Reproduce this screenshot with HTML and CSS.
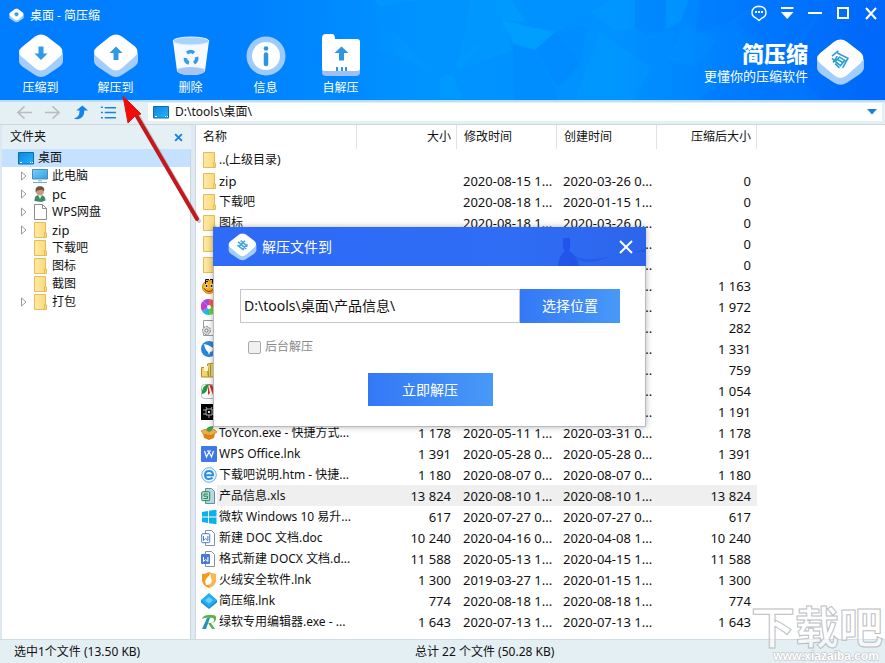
FILE: index.html
```html
<!DOCTYPE html>
<html lang="zh-CN">
<head>
<meta charset="utf-8">
<title>桌面 - 简压缩</title>
<link rel="stylesheet" href="styles.css">
</head>
<body>
<svg class="defs" aria-hidden="true">
  <defs>
    <linearGradient id="gf" x1="0" x2="1"><stop offset="0" stop-color="#ffe9a6"/><stop offset="1" stop-color="#f9d978"/></linearGradient>
    <linearGradient id="gs" x1="0" y1="0" x2="1" y2="1"><stop offset="0" stop-color="#0d86dd"/><stop offset="1" stop-color="#27b4fb"/></linearGradient>
    <linearGradient id="gm" x1="0" y1="0" x2="1" y2="1"><stop offset="0" stop-color="#7fd0f8"/><stop offset="1" stop-color="#2c9fe6"/></linearGradient>
    <symbol id="folder" viewBox="0 0 16 16"><path d="M2.500 .5h11v10.500h1v4.500h-12z" fill="url(#gf)" stroke="#e3bd58"/><path d="M12.500 15v-4.500h1.500" fill="none" stroke="#e3bd58"/></symbol>
    <symbol id="desktop" viewBox="0 0 16 16"><path d="M.5 2.500h15v11.500H.5z" fill="url(#gs)" stroke="#0b6cb5"/><path d="M2 12.500h2M12 12.500h1M14 12.500h1" stroke="#fff"/></symbol>
    <symbol id="monitor" viewBox="0 0 16 16"><path d="M.5 1.500h15v9.500H.5z" fill="url(#gm)" stroke="#4d8db5"/><path d="M6 11.500h4v2H6z" fill="#a9c8dc"/><path d="M1 14.500h14" stroke="#76a9cb"/></symbol>
    <symbol id="user" viewBox="0 0 16 16"><path d="M2.500 15c0-4 1-6 5-6s6 2 6 5.500l-4 1.500z" fill="#3c8a68"/><path d="M6 9l2 4 2-4z" fill="#dfeee4"/><circle cx="8" cy="5.500" r="3.800" fill="#c8997b"/><path d="M4 7C2.500 2 5 0 8 .3c3-.3 5 2 4 5l-2-1.500-5 .7z" fill="#6b5243"/></symbol>
    <symbol id="page" viewBox="0 0 16 16"><path d="M2.500.5h8l4 4v11h-12z" fill="#fff" stroke="#8c8c8c"/><path d="M10.500.5v4h4" fill="none" stroke="#8c8c8c"/></symbol>
    <symbol id="tile" viewBox="0 0 46 44"><path d="M1 19v8q0 3 4 6l12 8q6 4 12 0l12-8q4-3 4-6v-8z" fill="#a2cdfc"/><path d="M17 2.500q6-4 12 0l13 10q5 5 0 10L29 34q-6 5-12 0L4 23q-6-5 0-10z" fill="#fff"/></symbol>
    <symbol id="smile" viewBox="0 0 16 16"><circle cx="8" cy="9" r="6.500" fill="#f9b51c" stroke="#d87a18"/><path d="M4.500 6V1.500H8M4.500 3.500H7M9 1.500h5M11.500 2v3.500" fill="none" stroke="#111"/><path d="M3 10.500q5 6 10 0" fill="none" stroke="#862b11"/><circle cx="5.500" cy="8" r="1.700" fill="#fff"/><circle cx="10.500" cy="8" r="1.700" fill="#fff"/><circle cx="5.500" cy="8" r="1"/><circle cx="10.500" cy="8" r="1"/></symbol>
    <symbol id="wheel" viewBox="0 0 16 16"><path d="M8 8L2 2a8 8 0 0 1 6-2z" fill="#9f4fe0"/><path d="M8 8V0a8 8 0 0 1 8 8z" fill="#ff5a43"/><path d="M8 8h8a8 8 0 0 1-8 8z" fill="#6bd334"/><path d="M8 8v8a8 8 0 0 1-7-4z" fill="#1fb7ef"/><path d="M8 8l-7 4A8 8 0 0 1 2 2z" fill="#c93bd8"/><circle cx="8" cy="8" r="2" fill="#fff"/></symbol>
    <symbol id="gearfile" viewBox="0 0 16 16"><path d="M2.500.5h9l3 3v12h-12z" fill="#fff" stroke="#999"/><circle cx="5.500" cy="10.500" r="4" fill="#ddd" stroke="#777" stroke-dasharray="2 1"/><circle cx="5.500" cy="10.500" r="1.500" fill="#fff" stroke="#777"/></symbol>
    <symbol id="bird" viewBox="0 0 16 16"><circle cx="8" cy="8" r="8" fill="#2a86d4"/><path d="M3 3q6 1 10 5l-2 1 1 1-3 1-1 3-1-3q-3-2-4-8z" fill="#fff"/></symbol>
    <symbol id="books" viewBox="0 0 16 16"><path d="M.5 5.500h6l1 9.500h-7zM6.500 2l7-1 1 14h-7z" fill="#f4d36d" stroke="#b98b22"/><path d="M3 4h4v5H3z" fill="#fff7d2"/><path d="M9.500 2.500v12" stroke="#7fa83b"/></symbol>
    <symbol id="leaf" viewBox="0 0 16 16"><rect x=".5" y="1.500" width="15" height="14" rx="3" fill="#fff" stroke="#bbb"/><path d="M1 8q1-6 7-7l-2 6q-1 3-5 4z" fill="#26963a"/><path d="M8 1q6 2 7 9l-3 2z" fill="#d92c22"/><path d="M7 2l2 8-2 2z" fill="#d92c22"/></symbol>
    <symbol id="bug" viewBox="0 0 16 16"><path d="M0 0h16v16H0z"/><path d="M5 5h6v6H5zM2 6h3M2 10h3M11 6h3M11 10h3M6 5L5 3M10 5l1-2M8 11v3" fill="none" stroke="#aaa"/><path d="M7 7h2v2H7z" fill="#ddd"/></symbol>
    <symbol id="box" viewBox="0 0 16 16"><path d="M2 8l6 2 6-2-1 5-5 2-5-2z" fill="#db8318"/><path d="M0 6l4-2 4 3 5-3 3 3-6 4-3-2-4 1z" fill="#f1ad3d" stroke="#a9610f" stroke-width=".5"/><path d="M5 5q1-4 8-4-1 4-5 6z" fill="#3fa044"/></symbol>
    <symbol id="wps" viewBox="0 0 16 16"><rect width="16" height="16" rx="1" fill="#3f78e8"/><path d="M3.500 5l2 6L8 6l2.500 5 2-6M6 5h4" fill="none" stroke="#fff" stroke-width="1.200"/></symbol>
    <symbol id="ie" viewBox="0 0 16 16"><circle cx="8" cy="8" r="7.300" fill="#eaf5fd" stroke="#6cb2e8"/><path d="M4 8.300h8Q12 4 8 4 4 4 4 8.300q.5 3.700 4 3.700 2 0 3.500-1.500" fill="none" stroke="#2b8fdb" stroke-width="2"/></symbol>
    <symbol id="xls" viewBox="0 0 16 16"><path d="M4.500.5h6l3 3v12h-9z" fill="#b9d7e4" stroke="#648f9c"/><rect x=".7" y="3.700" width="8" height="9" rx="1" fill="#b7e0cd" stroke="#23875d"/><path d="M7 6H3v2.200h3.500v2.300H2.500" fill="none" stroke="#23875d"/></symbol>
    <symbol id="win" viewBox="0 0 16 16"><path d="M1 3l6-1v5.500H1zM8 1.800L15.500.8v6.700H8zM1 8.500h6V14l-6-1zM8 8.500h7.500v6.700L8 14.200z" fill="#09b2ec"/></symbol>
    <symbol id="doc" viewBox="0 0 16 16"><path d="M4.500.5h6l3 3v12h-9z" fill="#fff" stroke="#7c8fae"/><rect x=".7" y="3.700" width="8" height="9" rx="1" fill="#fff" stroke="#4a7ac9"/><path d="M2.500 6v4.500l2.200-2 2.200 2V6" fill="none" stroke="#4a7ac9"/></symbol>
    <symbol id="docx" viewBox="0 0 16 16"><path d="M4.500.5h6l3 3v12h-9z" fill="#fff" stroke="#7c8fae"/><rect y="3" width="9" height="10" rx="1" fill="#4a7bd4"/><path d="M2.500 6v4.500l2.200-2 2.200 2V6" fill="none" stroke="#fff"/></symbol>
    <symbol id="fire" viewBox="0 0 16 16"><path d="M1 2q4 0 7-2 3 2 7 2v6q0 5-7 8-7-3-7-8z" fill="#f39b21"/><path d="M8 0q3 2 7 2v6q0 5-7 8z" fill="#f9b84e"/><path d="M5 13Q2 8 10 2q-1 4 1 6 0 5-6 5z" fill="#fff"/></symbol>
    <symbol id="gem" viewBox="0 0 16 16"><path d="M0 7v2.500L8 16l8-6.500V7z" fill="#1990d8"/><path d="M8 0l8 7-8 7-8-7z" fill="#27aeef"/><path d="M8 4l4 3.200L8 10.500 4 7.200z" fill="#66d1f9"/></symbol>
    <symbol id="redit" viewBox="0 0 16 16"><path d="M1 5Q2 1 8 1h3q5 0 4 4t-5 4l4 6h-3L7 9h2q4 0 4-3T9 4Q4 3 1 5z" fill="#57b34b"/><path d="M6 4h3L5 15H1z" fill="#2496b4"/></symbol>
    <symbol id="tri" viewBox="0 0 8 10"><path d="M1.500 1v8L6 5z" fill="#fff" stroke="#999"/></symbol>
    <symbol id="cross" viewBox="0 0 16 16"><path d="M2 2l12 12M14 2L2 14" fill="none" stroke="currentColor" stroke-width="2"/></symbol>
  </defs>
</svg>

<div class="app">
  <header class="top">
    <svg class="facets" viewBox="0 0 885 100" preserveAspectRatio="none" aria-hidden="true">
      <g fill="#00b4ff">
        <path d="M470 0h30l5 22-48 48z" opacity=".14"/><path d="M503 21l52 11-20 18-22-7z" opacity=".35"/><path d="M505 22l8 28-55 21-4-8z" opacity=".12"/>
        <path d="M590 12L610 0h25v28l-20 3z" opacity=".12"/><path d="M374 0h46l-40 7z" opacity=".16"/><path d="M380 15l50 55-50-20z" opacity=".1"/><path d="M440 78l12-4 10 24h-22z" opacity=".2"/><path d="M600 32l50 35-15 33h-60z" opacity=".12"/><path d="M665 0h24l-9 22-15 8z" opacity=".25"/><path d="M668 60l18-38 30 18-20 28z" opacity=".1"/><path d="M500 0h12l14 22-23-2z" opacity=".22"/>
      </g>
      <g fill="#0064f8">
        <path d="M513 46l22 4 22 42v8h-43z" opacity=".1"/><path d="M535 50l20-18 25 33-22 23z" opacity=".16"/><path d="M555 32l24 33 8-36-14-5z" opacity=".07"/>
        <path d="M635 28V0h32v30l-20 5z" opacity=".1"/><path d="M700 0h65l-35 22-35 12z" opacity=".16"/><path d="M765 0h60l-40 60-50-38z" opacity=".14"/><path d="M830 0h55v100h-65l-30-40z" opacity=".2"/><path d="M700 100l45-42 40 42z" opacity=".14"/><path d="M310 52l30-18 30 66h-32z" opacity=".06"/>
      </g>
    </svg>
    <div class="titlebar">
      <div class="title"><svg class="i15" viewBox="0 0 46 44"><use href="#tile"/><path d="M17 18h12M23 12v12" stroke="#38a0e8" stroke-width="7"/></svg><span>桌面 - 简压缩</span></div>
      <div class="controls">
        <button aria-label="反馈"><svg viewBox="0 0 18 18"><path d="M9 16.500L6 14Q2 12.500 2 8.500 2.300 2.500 9 2.200q6.700.3 7 6.300 0 4-4 5.500z" fill="none" stroke="currentColor" stroke-width="1.400"/><path d="M5 8h2M8 8h2M11 8h2" stroke="currentColor" stroke-width="2"/></svg></button>
        <button aria-label="菜单"><svg viewBox="0 0 18 18"><path d="M3 4h12.500" stroke="currentColor" stroke-width="2"/><path d="M3 8h12.500L9.200 15z" fill="currentColor"/></svg></button>
        <button aria-label="最小化"><svg viewBox="0 0 18 18"><path d="M2 9h14" stroke="currentColor" stroke-width="2"/></svg></button>
        <button aria-label="最大化"><svg viewBox="0 0 18 18"><path d="M4 4h10v10H4z" fill="none" stroke="currentColor" stroke-width="2"/></svg></button>
        <button aria-label="关闭"><svg viewBox="0 0 18 18"><path d="M4 4l10 11M14 4L4 15" stroke="currentColor" stroke-width="2"/></svg></button>
      </div>
    </div>
    <div class="ribbon">
      <nav class="tools">
        <button><svg viewBox="0 0 46 44"><use href="#tile"/><path d="M20.500 12.500h5v7h4L23 26l-6.500-6.500h4z" fill="#2f9be6"/></svg><span>压缩到</span></button>
        <button><svg viewBox="0 0 46 44"><use href="#tile"/><path d="M20.500 26v-7h-4L23 12.500l6.500 6.500h-4v7z" fill="#2f9be6"/></svg><span>解压到</span></button>
        <button><svg viewBox="0 0 46 44"><path d="M5 7l4 30q2 4 14 4t14-4l4-30z" fill="#f4faff"/><ellipse cx="23" cy="7" rx="18" ry="4" fill="#a9d3fb" stroke="#e3f2ff"/><path d="M9.500 35q13-4 27 0l-.5 3q-3 3-13 3t-13-3z" fill="#a8c4f4"/><path d="M19 19q4-3 7 0M28.500 23q1 4-2.500 6M21 29q-4-1-3.500-5" fill="none" stroke="#359be8" stroke-width="3.500"/></svg><span>删除</span></button>
        <button><svg viewBox="0 0 46 44"><circle cx="23" cy="22" r="19.500" fill="#9dcbfb"/><circle cx="23" cy="22" r="14" fill="#fff"/><circle cx="23" cy="14.500" r="2.300" fill="#2f95df"/><path d="M23 20.500v9.500" stroke="#2f95df" stroke-width="4.500" stroke-linecap="round"/></svg><span>信息</span></button>
        <button><svg viewBox="0 0 46 44"><path d="M4 30h38v8q0 4-4 4H8q-4 0-4-4z" fill="#9fbff6"/><path d="M4 4q0-4 4-4h6q3 0 3 5h22q3 0 3 3v26q0 3-3 3H7q-3 0-3-3z" fill="#fff"/><path d="M21 26.500V19h-4.500l7-6.500 7 6.500H26v7.500zM18 33h2v4h-2zM23 33h2v4h-2zM27 33h2v4h-2z" fill="#2f95df"/></svg><span>自解压</span></button>
      </nav>
      <div class="brand">
        <div class="brandtext"><strong>简压缩</strong><span>更懂你的压缩软件</span></div>
        <svg viewBox="0 0 46 44"><use href="#tile"/><g fill="none" stroke="#2c9ed6" stroke-width="1.500"><path d="M15 16l6-5M17 20l-2-2M18 23l4 4M20 13l10 5-5 9M20 16l-4 6M22 17l5 3-4 5-5-4zM20 19l5 3"/></g></svg>
      </div>
    </div>
  </header>

  <div class="nav">
    <div class="navbtns">
      <button aria-label="后退" class="off"><svg viewBox="0 0 18 18"><path d="M17 9H2M9 2.500L2 9l7 6.500" fill="none" stroke="currentColor" stroke-width="1.700"/></svg></button>
      <button aria-label="前进" class="off"><svg viewBox="0 0 18 18"><path d="M1 9h15M9 2.500L16 9l-7 6.500" fill="none" stroke="currentColor" stroke-width="1.700"/></svg></button>
      <button aria-label="向上"><svg viewBox="0 0 18 18"><path d="M2 15q6 0 6-8H4.500L11 1.500 17 7h-4q0 8-6 9-3 .5-5-1z" fill="currentColor"/></svg></button>
      <button aria-label="列表"><svg viewBox="0 0 18 18"><path d="M1 3.500h2M5 4h12M1 9h2M5 9h12M1 14.500h2M5 14.500h12" stroke="currentColor" stroke-width="1.700"/></svg></button>
    </div>
    <div class="address"><svg class="i16"><use href="#desktop"/></svg><input aria-label="地址" value="D:\tools\桌面\"><button aria-label="展开"><svg viewBox="0 0 10 6"><path d="M0 0h10L5 5.500z" fill="currentColor"/></svg></button></div>
  </div>

  <main class="panes">
    <aside class="side">
      <div class="sidehead"><h2>文件夹</h2><button aria-label="关闭文件夹"><svg viewBox="0 0 16 16"><path d="M2 2l12 12M14 2L2 14" stroke="currentColor" stroke-width="3.500"/></svg></button></div>
      <ul class="tree">
        <li class="root"><svg class="i16"><use href="#desktop"/></svg><span>桌面</span></li>
        <li><svg class="tw"><use href="#tri"/></svg><svg class="i16"><use href="#monitor"/></svg><span>此电脑</span></li>
        <li><svg class="tw"><use href="#tri"/></svg><svg class="i16"><use href="#user"/></svg><span class="latin">pc</span></li>
        <li><svg class="tw"><use href="#tri"/></svg><svg class="i16"><use href="#page"/></svg><span>WPS网盘</span></li>
        <li><svg class="tw"><use href="#tri"/></svg><svg class="i16"><use href="#folder"/></svg><span class="latin">zip</span></li>
        <li><i class="tw"></i><svg class="i16"><use href="#folder"/></svg><span>下载吧</span></li>
        <li><i class="tw"></i><svg class="i16"><use href="#folder"/></svg><span>图标</span></li>
        <li><i class="tw"></i><svg class="i16"><use href="#folder"/></svg><span>截图</span></li>
        <li><svg class="tw"><use href="#tri"/></svg><svg class="i16"><use href="#folder"/></svg><span>打包</span></li>
      </ul>
    </aside>
    <section class="list">
      <table>
        <colgroup><col class="cname"><col class="c"><col class="c"><col class="c"><col class="c"></colgroup>
        <thead><tr><th>名称</th><th class="r">大小</th><th>修改时间</th><th>创建时间</th><th class="r">压缩后大小</th></tr></thead>
        <tbody>
          <tr><td><div><svg class="i16"><use href="#folder"/></svg>..(上级目录)</div></td><td></td><td></td><td></td><td></td></tr>
          <tr><td><div><svg class="i16"><use href="#folder"/></svg><span class="latin">zip</span></div></td><td></td><td>2020-08-15 1...</td><td>2020-03-26 0...</td><td>0</td></tr>
          <tr><td><div><svg class="i16"><use href="#folder"/></svg>下载吧</div></td><td></td><td>2020-08-18 1...</td><td>2020-01-15 1...</td><td>0</td></tr>
          <tr><td><div><svg class="i16"><use href="#folder"/></svg>图标</div></td><td></td><td>2020-08-18 1...</td><td>2020-03-26 0...</td><td>0</td></tr>
          <tr><td><div><svg class="i16"><use href="#folder"/></svg></div></td><td></td><td></td><td>2020-03-26 0...</td><td>0</td></tr>
          <tr><td><div><svg class="i16"><use href="#folder"/></svg></div></td><td></td><td></td><td>2020-03-26 0...</td><td>0</td></tr>
          <tr><td><div><svg class="i16"><use href="#smile"/></svg></div></td><td></td><td></td><td>2020-03-26 0...</td><td>1 163</td></tr>
          <tr><td><div><svg class="i16"><use href="#wheel"/></svg></div></td><td></td><td></td><td>2020-03-26 0...</td><td>1 972</td></tr>
          <tr><td><div><svg class="i16"><use href="#gearfile"/></svg></div></td><td></td><td></td><td>2020-03-26 0...</td><td>282</td></tr>
          <tr><td><div><svg class="i16"><use href="#bird"/></svg></div></td><td></td><td></td><td>2020-03-26 0...</td><td>1 331</td></tr>
          <tr><td><div><svg class="i16"><use href="#books"/></svg></div></td><td></td><td></td><td>2020-03-26 0...</td><td>759</td></tr>
          <tr><td><div><svg class="i16"><use href="#leaf"/></svg></div></td><td></td><td></td><td>2020-03-26 0...</td><td>1 054</td></tr>
          <tr><td><div><svg class="i16"><use href="#bug"/></svg></div></td><td></td><td></td><td>2020-03-26 0...</td><td>1 191</td></tr>
          <tr><td><div><svg class="i16"><use href="#box"/></svg>ToYcon.exe - 快捷方式...</div></td><td>1 178</td><td>2020-05-11 1...</td><td>2020-03-31 0...</td><td>1 178</td></tr>
          <tr><td><div><svg class="i16"><use href="#wps"/></svg>WPS Office.lnk</div></td><td>1 391</td><td>2020-05-28 0...</td><td>2020-05-28 0...</td><td>1 391</td></tr>
          <tr><td><div><svg class="i16"><use href="#ie"/></svg>下载吧说明.htm - 快捷...</div></td><td>1 180</td><td>2020-08-07 0...</td><td>2020-08-07 0...</td><td>1 180</td></tr>
          <tr class="sel"><td><div><svg class="i16"><use href="#xls"/></svg>产品信息.xls</div></td><td>13 824</td><td>2020-08-10 1...</td><td>2020-08-10 1...</td><td>13 824</td></tr>
          <tr><td><div><svg class="i16"><use href="#win"/></svg>微软 Windows 10 易升...</div></td><td>617</td><td>2020-07-27 0...</td><td>2020-07-27 0...</td><td>617</td></tr>
          <tr><td><div><svg class="i16"><use href="#doc"/></svg>新建 DOC 文档.doc</div></td><td>10 240</td><td>2020-04-16 0...</td><td>2020-04-08 1...</td><td>10 240</td></tr>
          <tr><td><div><svg class="i16"><use href="#docx"/></svg>格式新建 DOCX 文档.d...</div></td><td>11 588</td><td>2020-05-13 1...</td><td>2020-04-15 1...</td><td>11 588</td></tr>
          <tr><td><div><svg class="i16"><use href="#fire"/></svg>火绒安全软件.lnk</div></td><td>1 300</td><td>2019-03-27 1...</td><td>2020-01-15 1...</td><td>1 300</td></tr>
          <tr><td><div><svg class="i16"><use href="#gem"/></svg>简压缩.lnk</div></td><td>774</td><td>2020-08-18 1...</td><td>2020-08-18 1...</td><td>774</td></tr>
          <tr><td><div><svg class="i16"><use href="#redit"/></svg>绿软专用编辑器.exe - ...</div></td><td>1 643</td><td>2020-07-13 1...</td><td>2020-07-13 1...</td><td>1 643</td></tr>
        </tbody>
      </table>
    </section>
  </main>

  <footer class="status"><span>选中1个文件 (13.50 KB)</span><span>总计 22 个文件 (50.28 KB)</span></footer>

  <form class="dialog" role="dialog" aria-labelledby="dlgtitle">
    <div class="dlghead">
      <svg class="figure" viewBox="0 0 110 39" aria-hidden="true"><path d="M27 11h7v10l-1 3q8 4 10 15H22q1-11 7-15l-2-3z" fill="#204fe8" opacity=".8"/><path d="M34 27q14 8 34 4t42-9v3q-22-1-42 7t-34-5z" fill="#2559e4" opacity=".7"/></svg>
      <svg class="dlgicon" viewBox="0 0 46 44"><use href="#tile"/><path d="M16 14l13 11M20 12l11 9M15 19l10 8M27 12l-9 9M31 18l-8 7" stroke="#42a7db" stroke-width="2.500"/></svg>
      <h1 id="dlgtitle">解压文件到</h1>
      <button type="button" aria-label="关闭对话框"><svg viewBox="0 0 16 16"><use href="#cross"/></svg></button>
    </div>
    <div class="dlgbody">
      <div class="path"><input aria-label="解压路径" value="D:\tools\桌面\产品信息\"><button type="button">选择位置</button></div>
      <label class="check"><input type="checkbox">后台解压</label>
      <button type="button" class="go">立即解压</button>
    </div>
  </form>

  <svg class="arrow" viewBox="0 0 90 140" aria-hidden="true"><path d="M84 126L23 21" stroke="#8d8d8d" stroke-width="4" stroke-linecap="round" opacity=".45"/><path d="M82 124L20 18" stroke="#c4191c" stroke-width="4" stroke-linecap="round"/><path d="M8 1l18 18-6 2-7 7z" fill="#f00d08" stroke="#d8171a"/></svg>
  <div class="mark"><b>下载吧</b><span>www.xiazaiba.com</span></div>
</div>
</body>
</html>
```
FILE: styles.css
```css
* { box-sizing: border-box; }
body { margin: 0; font: 12px/18px "Noto Sans", "Noto Sans CJK SC", sans-serif; color: #111; }
button { border: 0; padding: 0; background: none; font: inherit; color: inherit; display: flex; align-items: center; justify-content: center; }
input { font: inherit; color: inherit; border: 0; padding: 0; min-width: 0; }
h1, h2 { margin: 0; font: inherit; }
svg { flex: none; }
.defs { position: absolute; width: 0; height: 0; }
.i16 { width: 16px; height: 16px; }
.i15 { width: 15px; height: 15px; }
.latin { font-size: 13px; }
.app { position: relative; min-height: 100vh; display: flex; flex-direction: column; overflow: hidden; }

.top { position: relative; height: 100px; color: #fff; background: linear-gradient(90deg, #007cff 0, #0081ff 28%, #0094ff 48%, #0092ff 70%, #007bff 86%, #0068fa 100%); }
.facets { position: absolute; inset: 0; width: 100%; height: 100%; }
.titlebar, .ribbon { position: relative; display: flex; justify-content: space-between; }
.titlebar { height: 31px; }
.title { display: flex; align-items: center; gap: 6px; padding-left: 9px; }
.controls { display: flex; height: 26px; }
.controls button { width: 28px; }
.controls svg { width: 18px; height: 18px; }
.tools { display: flex; padding: 3px 0 0 3px; }
.tools button { width: 75px; flex-direction: column; gap: 1px; }
.tools svg { width: 46px; height: 44px; }
.brand { display: flex; align-items: flex-start; gap: 8px; padding: 8px 20px 0 0; }
.brand > svg { width: 49px; height: 47px; }
.brandtext { display: flex; flex-direction: column; align-items: flex-end; font-size: 13px; }
.brandtext strong { font-size: 22px; line-height: 28px; font-weight: 900; }

.nav { display: flex; height: 25px; padding: 1px 3px 3px 10px; background: #e5f0f5; border-top: 2px solid #b9ddfb; border-bottom: 1px solid #ccd7dd; }
.navbtns { display: flex; width: 138px; color: #1683e8; }
.navbtns button { width: 28px; }
.navbtns svg { width: 17px; height: 17px; }
.navbtns .off { color: #b9bdc0; }
.address { flex: 1; display: flex; align-items: center; gap: 6px; padding: 0 5px; background: #fff; }
.address input { flex: 1; }
.address button { color: #1d80d2; }
.address button svg { width: 10px; height: 6px; }

.panes { flex: 1; display: flex; background: #fff; }
.side { display: flex; flex-direction: column; width: 196px; border-left: 2px solid #dce8f0; border-right: 5px solid #dfe9f3; }
.sidehead { display: flex; align-items: center; justify-content: space-between; height: 24px; padding: 0 8px; background: #e5f0f5; }
.sidehead button { color: #1683e8; }
.sidehead svg { width: 9px; height: 9px; }
.tree { flex: 1; list-style: none; margin: 0; padding: 0; border-right: 1px solid #c9d4dc; }
.tree li { display: flex; align-items: center; gap: 4px; height: 18px; padding-left: 18px; }
.tree .root { padding-left: 16px; background: #c4e2ff; }
.tree .tw { width: 8px; height: 10px; }

.list { flex: 1; border-left: 1px solid #cfd8df; margin-left: -1px; }
table { width: 561px; table-layout: fixed; border-collapse: separate; border-spacing: 0; }
.cname { width: 161px; }
.c { width: 100px; }
th, td { padding: 0 5px 0 7px; text-align: left; white-space: nowrap; overflow: hidden; }
th { height: 24px; font-weight: 400; border-right: 1px solid #dfe3e6; }
td { height: 21px; font-size: 13px; padding: 0 6px; }
th.r, td:nth-child(2), td:nth-child(5) { text-align: right; }
td:first-child { padding: 0 0 0 5px; font-size: 12px; }
td div { display: flex; align-items: center; gap: 2px; }
.sel { background: #efefef; }
.sel td:first-child { background: linear-gradient(90deg, #fff 21px, #efefef 21px); }

.status { display: grid; grid-template-columns: 401px 1fr; align-items: center; height: 24px; padding-left: 14px; background: #e4eff4; border-top: 1px solid #cfdce4; }

.dialog { position: absolute; left: 213px; top: 227px; width: 433px; background: #fff; border: 1px solid #b8bcc2; border-top: 0; box-shadow: 0 0 6px rgba(0, 0, 0, .3); }
.dlghead { position: relative; display: flex; align-items: center; gap: 5px; height: 39px; margin: 0 -1px; padding: 0 12px 0 15px; color: #fff; background: linear-gradient(90deg, #2d6bf8, #2f6df5 70%, #2c65ec); }
.figure { position: absolute; right: 0; top: 0; width: 110px; height: 39px; }
.dlgicon { width: 29px; height: 28px; }
.dlghead h1 { flex: 1; font-size: 14px; }
.dlghead button { position: relative; }
.dlghead button svg { width: 16px; height: 16px; }
.dlgbody { display: flex; flex-direction: column; padding: 23px 25px 20px 26px; }
.path { display: flex; height: 34px; font-size: 14px; }
.path input { flex: 1; border: 1px solid #c6c6c6; padding: 0 3px; }
.path button { width: 100px; color: #fff; background: linear-gradient(90deg, #3478f6, #4899f7); }
.check { display: flex; align-items: center; gap: 4px; height: 18px; margin: 15px 0 17px 8px; color: #8a8a8a; }
.check input { appearance: none; width: 13px; height: 13px; margin: 0; border: 1px solid #a9a9a9; border-radius: 2px; background: #f0f0f0; }
.go { align-self: center; width: 125px; height: 33px; font-size: 14px; color: #fff; background: linear-gradient(90deg, #3478f6, #4899f7); }

.arrow { position: absolute; left: 115px; top: 95px; width: 90px; height: 140px; }
.mark { position: absolute; right: 2px; bottom: 0; display: flex; flex-direction: column; align-items: flex-end; color: rgba(255, 255, 255, .6); -webkit-text-stroke: 1px #bcbec1; }
.mark b { font-size: 44px; line-height: 44px; font-weight: 700; }
.mark span { padding-right: 4px; font: 700 12px/14px "Liberation Sans", sans-serif; -webkit-text-stroke: 1px #b9bbbd; color: #fff; paint-order: stroke; }
```
